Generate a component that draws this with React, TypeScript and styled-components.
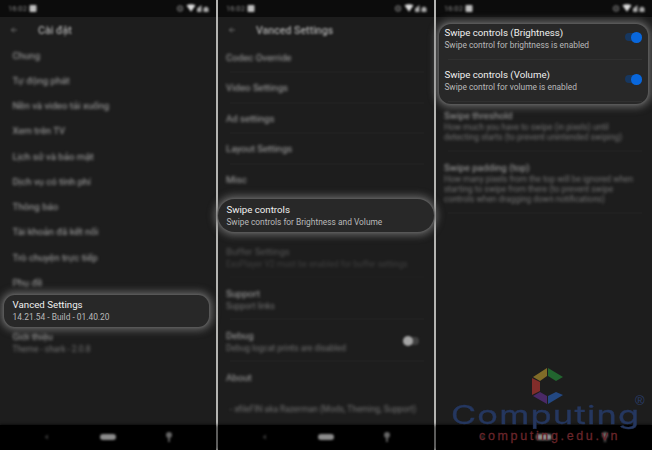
import React from "react";
import styled, { createGlobalStyle } from "styled-components";

const GlobalStyle = createGlobalStyle`
  * { box-sizing: border-box; }
  body { margin: 0; background: #1d1d1d; overflow: hidden; }
`;

const Board = styled.main`
  position: relative;
  display: grid;
  grid-template-columns: repeat(3, 216px);
  column-gap: 2px;
  width: 652px;
  height: 450px;
  overflow: hidden;
  background: #b4b4b2;
  font-family: Roboto, "Noto Sans", sans-serif;
`;

const Phone = styled.section`
  display: flex;
  flex-direction: column;
  height: 450px;
  background: #1d1d1d;
`;

const StatusBar = styled.header`
  display: flex;
  justify-content: space-between;
  height: 17px;
  padding: 3px 7px 0 8px;
  background: #0c0c0c;
  color: #858585;
  font-size: 7.6px;
  line-height: 11px;
`;

const Cluster = styled.div`
  display: flex;
  gap: 2px;
  filter: blur(1.3px);
`;

const TitleBar = styled.div`
  display: flex;
  align-items: center;
  height: 26px;
  padding-left: 9px;
  gap: 19px;
  color: #a8a8a8;
  font-size: 10.6px;
  font-weight: 500;
  filter: blur(1.3px);
`;

const Content = styled.div`
  flex: 1;
  min-height: 0;
`;

const Item = styled.div<{ $h: number; $x?: number; $top?: number; $line?: boolean; $dim?: boolean }>`
  height: ${(p) => p.$h}px;
  padding: ${(p) => p.$top ?? 0}px 0 0 ${(p) => p.$x ?? 8}px;
  opacity: ${(p) => (p.$dim ? 0.4 : 1)};
  background: ${(p) => (p.$line ? "linear-gradient(#202020, #202020) 12px 100% / 194px 2px no-repeat" : "none")};
`;

const Label = styled.div`
  width: max-content;
  color: #a8a8a8;
  font-size: 9.65px;
  line-height: 12px;
  white-space: nowrap;
  filter: blur(1.35px);
`;

const Note = styled(Label)<{ $lh?: number }>`
  color: #737373;
  font-size: 8.38px;
  line-height: ${(p) => p.$lh ?? 12}px;
  white-space: pre;
`;

const Spotlight = styled.div<{ $w: number; $h: number; $m: string; $r: number; $top?: number }>`
  position: relative;
  z-index: 1;
  width: ${(p) => p.$w}px;
  height: ${(p) => p.$h}px;
  margin: ${(p) => p.$m};
  padding-top: ${(p) => p.$top ?? 5}px;
  border-radius: ${(p) => p.$r}px;
  background: #282828;
  box-shadow: 0 0 2px 1px #5c5c5c, 0 0 7px 4px rgba(125, 125, 125, 0.62);
`;

const Sharp = styled.div<{ $x: number; $sub?: boolean }>`
  padding-left: ${(p) => p.$x}px;
  color: ${(p) => (p.$sub ? "#b9b9b9" : "#f0f0f0")};
  font-size: ${(p) => (p.$sub ? 8.4 : 9.7)}px;
  line-height: 12px;
  white-space: nowrap;
`;

const SwitchRow = styled.div`
  display: flex;
  justify-content: space-between;
  height: 42px;
  padding-right: 6.5px;
  background: linear-gradient(#303030, #303030) 9px 32px / 194px 1px no-repeat;
`;

const Switch = styled.span<{ $on?: boolean }>`
  display: flex;
  justify-content: ${(p) => (p.$on ? "flex-end" : "flex-start")};
  align-items: center;
  width: ${(p) => (p.$on ? 17 : 16)}px;
  height: 8px;
  margin-top: ${(p) => (p.$on ? 6.3 : 7)}px;
  border-radius: 4px;
  background: ${(p) => (p.$on ? "#17375f" : "#404040")};
  filter: ${(p) => (p.$on ? "blur(0.4px)" : "blur(1.3px)")};
  &::after {
    content: "";
    width: ${(p) => (p.$on ? 10.5 : 10)}px;
    height: ${(p) => (p.$on ? 10.5 : 10)}px;
    flex: none;
    border-radius: 50%;
    background: ${(p) => (p.$on ? "#0967dc" : "#a5a5a5")};
  }
`;

const SplitRow = styled.div`
  display: flex;
  justify-content: space-between;
  padding-right: 15px;
`;

const NavBar = styled.nav`
  position: relative;
  height: 25px;
  background: #000;
  box-shadow: 0 0 3px #000;
`;

const NavIcons = styled.svg`
  display: block;
  filter: blur(1.1px);
`;

const Watermark = styled.div`
  position: absolute;
  z-index: 3;
  left: 451px;
  top: 367px;
  width: 201px;
  height: 82px;
  display: flex;
  flex-direction: column;
`;

const Brand = styled.div`
  display: flex;
  height: 28px;
  margin-top: -4px;
  color: #25375f;
  font-family: Inter, sans-serif;
`;

const BrandWord = styled.span`
  display: block;
  width: 137px;
  font-size: 25px;
  line-height: 28px;
  letter-spacing: 0.9px;
  transform: scaleX(1.375);
  transform-origin: left center;
  -webkit-text-stroke: 0.35px #25375f;
`;

const Registered = styled.span`
  width: 10px;
  height: 10px;
  margin: -5px 0 0 47px;
  color: #2a3d6c;
  font-family: "Liberation Sans", sans-serif;
  font-size: 13px;
  line-height: 10px;
`;

const Site = styled.div`
  padding-left: 28px;
  color: #68252a;
  font-family: "Liberation Sans", sans-serif;
  font-size: 12.5px;
  letter-spacing: 2.65px;
  line-height: 15px;
  white-space: nowrap;
  -webkit-text-stroke: 0.3px #68252a;
`;

const LogoSvg = styled.svg`
  display: block;
  flex: none;
  margin-left: 80px;
`;

const Status = () => (
  <StatusBar>
    <Cluster>
      <span>16:02</span>
      <svg width="8" height="11" viewBox="0 0 8 11"><rect x="0.5" y="2" width="7" height="7" rx="1" fill="#bebebe" /></svg>
    </Cluster>
    <Cluster>
      <svg width="34" height="11" viewBox="0 0 34 11">
        <circle cx="5" cy="5.5" r="2.7" fill="#333" stroke="#5d5d5d" strokeWidth="1.2" />
        <path d="M11.5 2.2Q16 .2 20.5 2.2L16 8.8Z" fill="#dedede" />
        <path d="M22 9V5.5L26.5 2V9Z" fill="#aaa" />
        <path d="M28.5 9V5L31 3.5 33.5 5V9Z" fill="#aaa" />
      </svg>
    </Cluster>
  </StatusBar>
);

const Heading = ({ children }: { children: React.ReactNode }) => (
  <TitleBar>
    <svg width="10" height="10" viewBox="0 0 10 10"><path d="M8 5H2M5 2.5L2.5 5L5 7.5" fill="none" stroke="#6c6c6c" strokeWidth="1" /></svg>
    <span>{children}</span>
  </TitleBar>
);

const Nav = () => (
  <NavBar>
    <NavIcons width="216" height="25" viewBox="0 0 216 25">
      <path d="M48 9.5L44.5 12L48 14.5Z" fill="#333" />
      <rect x="100" y="9" width="16" height="6" rx="3" fill="#8c8c8c" />
      <circle cx="169" cy="10" r="3" fill="#666" />
      <path d="M169 11V17" stroke="#666" strokeWidth="1.8" />
    </NavIcons>
  </NavBar>
);

const general = [
  "Chung", "Tự động phát", "Nền và video tải xuống", "Xem trên TV", "Lịch sử và bảo mật",
  "Dịch vụ có tính phí", "Thông báo", "Tài khoản đã kết nối", "Trò chuyện trực tiếp", "Phụ đề",
];
const vanced = ["Codec Override", "Video Settings", "Ad settings", "Layout Settings", "Misc"];

export default function App() {
  return (
    <Board>
      <GlobalStyle />
      <Phone>
        <Status />
        <Heading>Cài đặt</Heading>
        <Content>
          {general.map((name) => (
            <Item key={name} $h={25.25} $x={12.5} $top={6.5}><Label>{name}</Label></Item>
          ))}
          <Spotlight $w={205} $h={32} $m="-0.5px 0 0 4px" $r={11} $top={4.3}>
            <Sharp $x={8.6}>Vanced Settings</Sharp>
            <Sharp $x={8.6} $sub>14.21.54 - Build - 01.40.20</Sharp>
          </Spotlight>
          <Item $h={40} $x={12.5} $top={3.5}>
            <Label>Giới thiệu</Label>
            <Note>Theme - shark - 2.0.8</Note>
          </Item>
        </Content>
        <Nav />
      </Phone>

      <Phone>
        <Status />
        <Heading>Vanced Settings</Heading>
        <Content>
          {vanced.map((name, i) => (
            <Item key={name} $h={30.4} $top={9} $line={i < 4}><Label>{name}</Label></Item>
          ))}
          <Spotlight $w={216} $h={33} $m="4px 0 0 0" $r={17}>
            <Sharp $x={8.4}>Swipe controls</Sharp>
            <Sharp $x={8.4} $sub>Swipe controls for Brightness and Volume</Sharp>
          </Spotlight>
          <Item $h={46.5} $top={14.5} $line $dim>
            <Label>Buffer Settings</Label>
            <Note>ExoPlayer V2 must be enabled for buffer settings</Note>
          </Item>
          <Item $h={42} $top={10} $line><Label>Support</Label><Note>Support links</Note></Item>
          <Item $h={42} $top={10} $line>
            <SplitRow>
              <div><Label>Debug</Label><Note>Debug logcat prints are disabled</Note></div>
              <Switch />
            </SplitRow>
          </Item>
          <Item $h={31.5} $top={10}><Label>About</Label></Item>
          <Item $h={20} $x={12} $top={9.5}><Note>- xfileFIN aka Razerman (Mods, Theming, Support)</Note></Item>
        </Content>
        <Nav />
      </Phone>

      <Phone>
        <Status />
        <Content>
          <Spotlight $w={209} $h={80} $m="7px 0 0 3px" $r={12} $top={3}>
            {["Brightness", "Volume"].map((name) => (
              <SwitchRow key={name}>
                <div>
                  <Sharp $x={5.4}>Swipe controls ({name})</Sharp>
                  <Sharp $x={5.4} $sub>Swipe control for {name.toLowerCase()} is enabled</Sharp>
                </div>
                <Switch $on />
              </SwitchRow>
            ))}
          </Spotlight>
          <Item $h={48} $top={6} $line>
            <Label>Swipe threshold</Label>
            <Note $lh={10}>{"How much you have to swipe (in pixels) until\ndetecting starts (to prevent unintended swiping)"}</Note>
          </Item>
          <Item $h={62} $top={10} $line>
            <Label>Swipe padding (top)</Label>
            <Note $lh={10}>{"How many pixels from the top will be ignored when\nstarting to swipe from there (to prevent swipe\ncontrols when dragging down notifications)"}</Note>
          </Item>
        </Content>
        <Nav />
      </Phone>

      <Watermark>
        <LogoSvg width="34" height="38" viewBox="0 0 34 38">
          <path d="M2 10L16 1V9L9 14Z" fill="#806b28" />
          <path d="M17 1L32 10L25 14L17 9Z" fill="#22652f" />
          <path d="M1 11L9 15V24L1 28Z" fill="#812d2a" />
          <path d="M2 29L9 25L16 29V37Z" fill="#4a2966" />
          <path d="M17 29L25 25L32 28L17 37Z" fill="#234882" />
        </LogoSvg>
        <Brand><BrandWord>Computing</BrandWord><Registered>®</Registered></Brand>
        <Site>computing.edu.vn</Site>
      </Watermark>
    </Board>
  );
}
